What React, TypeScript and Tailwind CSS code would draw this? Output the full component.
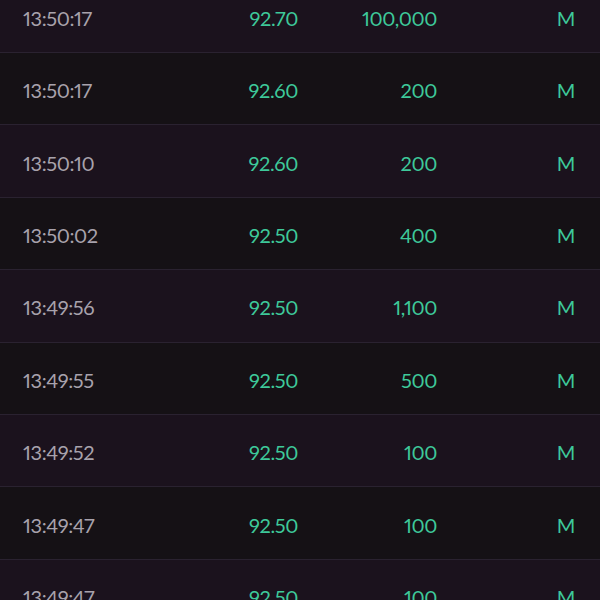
const TRADES = [
  { time: '13:50:17', price: '92.70', qty: '100,000', side: 'M' },
  { time: '13:50:17', price: '92.60', qty: '200', side: 'M' },
  { time: '13:50:10', price: '92.60', qty: '200', side: 'M' },
  { time: '13:50:02', price: '92.50', qty: '400', side: 'M' },
  { time: '13:49:56', price: '92.50', qty: '1,100', side: 'M' },
  { time: '13:49:55', price: '92.50', qty: '500', side: 'M' },
  { time: '13:49:52', price: '92.50', qty: '100', side: 'M' },
  { time: '13:49:47', price: '92.50', qty: '100', side: 'M' },
  { time: '13:49:47', price: '92.50', qty: '100', side: 'M' },
];

export default function App() {
  return (
    <div className="h-[600px] w-[600px] overflow-hidden bg-[#151115] font-['Lato',sans-serif] text-[20px] leading-none tracking-[-0.4px] proportional-nums">
      <div className="-mt-[19.5px]">
        {TRADES.map((t, i) => (
          <div
            key={i}
            className={
              'grid h-[72.43px] grid-cols-[175px_100px_139px_138px] items-center border-b border-[#2a2230] pl-[23px] pt-[3px] ' +
              (i % 2 === 0 ? 'bg-[#1b121d]' : 'bg-[#151115]')
            }
          >
            <span className="text-[#a8a2ac]">{t.time}</span>
            <span className="text-right text-[#3ec99a]">{t.price}</span>
            <span className="text-right text-[#3ec99a]">{t.qty}</span>
            <span className="text-right text-[#3ec99a]">{t.side}</span>
          </div>
        ))}
      </div>
    </div>
  );
}
